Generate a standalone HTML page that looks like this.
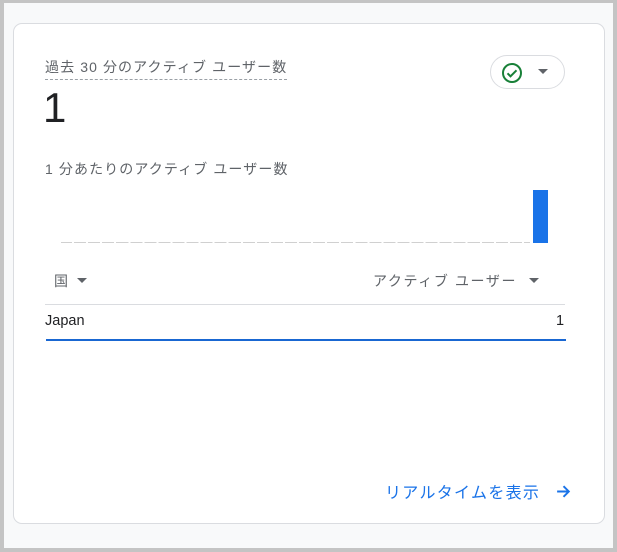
<!DOCTYPE html>
<html><head><meta charset="utf-8"><style>
*{margin:0;padding:0;box-sizing:border-box}
body{width:617px;height:552px;background:#c4c4c4;position:relative;overflow:hidden;font-family:"Liberation Sans","Noto Sans CJK JP",sans-serif}
.bg{position:absolute;left:4px;top:3px;width:609px;height:545px;background:#f8f9fa}
.card{position:absolute;left:13px;top:23px;width:592px;height:501px;background:#fff;border:1px solid #dadce0;border-radius:9px}
.a{position:absolute;white-space:nowrap}
</style></head><body>
<div class="bg"></div>
<div class="card"></div>
<div class="a" style="left:45px;top:57px;font-size:14px;color:#5f6368;letter-spacing:1.1px;border-bottom:1.5px dashed #9aa0a6;padding-bottom:2px">過去 30 分のアクティブ ユーザー数</div>
<div class="a" style="left:43px;top:84px;font-size:42px;color:#202124">1</div>
<div class="a" style="left:490px;top:55px;width:75px;height:34px;border:1px solid #dadce0;border-radius:17px"></div>
<svg class="a" style="left:500px;top:61px" width="24" height="24" viewBox="0 0 24 24"><circle cx="12" cy="12" r="9" fill="none" stroke="#188038" stroke-width="2"/><path d="M7.5 12.3l3 3 6-6" fill="none" stroke="#188038" stroke-width="2"/></svg>
<svg class="a" style="left:538px;top:69px" width="10" height="6"><path d="M0 0h10L5 5z" fill="#5f6368"/></svg>
<div class="a" style="left:45px;top:159px;font-size:14px;color:#5f6368;letter-spacing:1.1px">1 分あたりのアクティブ ユーザー数</div>
<div class="a" style="left:61px;top:242px;width:469px;border-top:1px dashed #c4c7c5;border-image:repeating-linear-gradient(90deg,#d0d0d0 0 12px,transparent 12px 14px) 1"></div>
<div class="a" style="left:533px;top:190px;width:15px;height:53px;background:#1a73e8"></div>
<div class="a" style="left:54px;top:271px;font-size:14px;color:#5f6368">国</div>
<svg class="a" style="left:77px;top:278px" width="10" height="6"><path d="M0 0h10L5 5z" fill="#5f6368"/></svg>
<div class="a" style="left:373px;top:271px;font-size:14px;color:#5f6368;letter-spacing:1.6px">アクティブ ユーザー</div>
<svg class="a" style="left:529px;top:278px" width="10" height="6"><path d="M0 0h10L5 5z" fill="#5f6368"/></svg>
<div class="a" style="left:45px;top:304px;width:520px;height:1px;background:#dadce0"></div>
<div class="a" style="left:45px;top:313px;font-size:14.5px;color:#202124">Japan</div>
<div class="a" style="left:556px;top:313px;font-size:14.5px;color:#202124">1</div>
<div class="a" style="left:46px;top:339px;width:520px;height:2px;background:#1967d2"></div>
<div class="a" style="left:385px;top:479px;font-size:16px;color:#1a73e8;letter-spacing:1.3px">リアルタイムを表示</div>
<svg class="a" style="left:555px;top:483px" width="17" height="17" viewBox="0 0 16 16"><path d="M2 8h11M8 3l5 5-5 5" fill="none" stroke="#1a73e8" stroke-width="1.8"/></svg>
</body></html>
